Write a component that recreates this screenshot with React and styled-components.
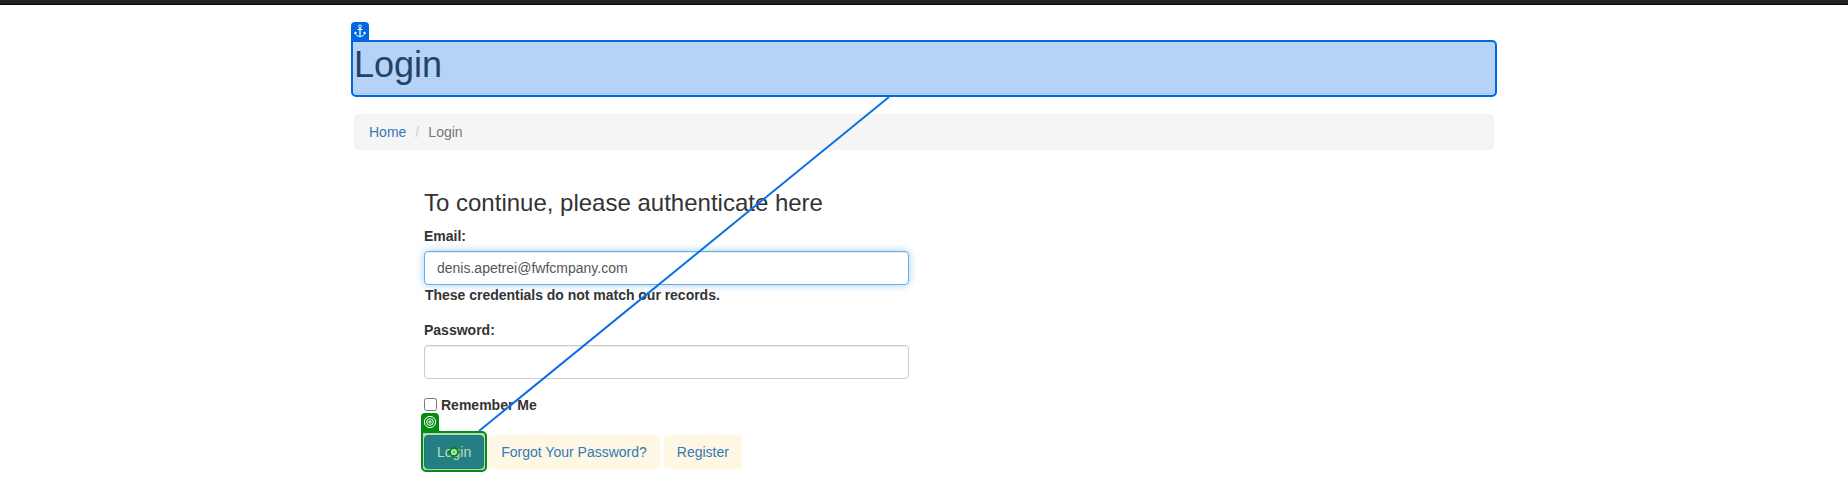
import React from "react";
import styled, { createGlobalStyle } from "styled-components";

const BLUE = "#0068e2";
const GREEN = "#008c0e";

const GlobalStyle = createGlobalStyle`
  *, *::before, *::after { box-sizing: border-box; }
  body {
    margin: 0;
    background: #fff;
    color: #333;
    font: 14px/20px "Liberation Sans", Arial, Helvetica, sans-serif;
    overflow: hidden;
  }
`;

const Page = styled.div`
  position: relative;
  height: 492px;
  overflow: hidden;
`;

const Navbar = styled.div`
  height: 5px;
  background: #222;
  border-bottom: 1px solid #080808;
`;

const Container = styled.main`
  width: 1140px;
  margin: 0 auto;
  padding-top: 39px;
`;

const PageHeader = styled.header`
  position: relative;
  height: 50px;
  border-bottom: 1px solid #eee;
  margin-bottom: 20px;
`;

const Title = styled.h1`
  margin: 0;
  font-size: 36px;
  font-weight: 400;
  line-height: 41px;
`;

const Breadcrumb = styled.nav`
  display: flex;
  height: 36px;
  padding: 8px 15px;
  border-radius: 4px;
  background: #f5f5f5;
  color: #777;
`;

const Separator = styled.span`
  width: 22px;
  padding-left: 9px;
  color: #ccc;
`;

const Link = styled.a`
  color: #337ab7;
  text-decoration: none;
`;

const Form = styled.form`
  width: 485px;
  margin: 40px 0 0 70px;
`;

const FormTitle = styled.h3`
  margin: 0 0 10px;
  font-size: 24px;
  font-weight: 400;
  line-height: 26px;
`;

const Group = styled.div`
  margin-bottom: 15px;
`;

const Label = styled.label`
  display: block;
  margin-bottom: 5px;
  font-weight: 700;
`;

const Input = styled.input`
  display: block;
  width: 100%;
  height: 34px;
  padding: 6px 12px;
  border: 1px solid ${(p) => (p.$active ? "#66afe9" : "#ccc")};
  border-radius: 4px;
  outline: 0;
  background: #fff;
  color: #555;
  font: inherit;
  box-shadow: inset 0 1px 1px rgba(0, 0, 0, 0.075)
    ${(p) => (p.$active ? ", 0 0 8px rgba(102, 175, 233, 0.6)" : "")};
`;

const ErrorText = styled.strong`
  display: block;
  padding-left: 1px;
  letter-spacing: -0.02px;
`;

const Remember = styled.label`
  display: flex;
  gap: 4px;
  height: 26px;
  margin-bottom: 15px;
  font-weight: 700;
  line-height: 22px;
`;

const Checkbox = styled.input`
  width: 13px;
  height: 13px;
  margin: 4px 0 0;
`;

const Actions = styled.div`
  display: flex;
  gap: 4px;
`;

const Button = styled.button`
  position: relative;
  height: 34px;
  padding: 6px 12px;
  border: 1px solid ${(p) => (p.$primary ? "#2e6da4" : "#fdf7e3")};
  border-radius: 4px;
  background: ${(p) => (p.$primary ? "#337ab7" : "#fdf7e3")};
  color: ${(p) => (p.$primary ? "#fff" : "#337ab7")};
  font: inherit;
  white-space: nowrap;
`;

const Highlight = styled.div`
  position: absolute;
  inset: ${(p) => p.$inset};
  border: 2px solid ${(p) => p.$color};
  border-radius: 0 5px 5px 5px;
  background: ${(p) => p.$fill};
`;

const Tag = styled.span`
  position: absolute;
  left: -2px;
  top: -20px;
  display: grid;
  place-items: center;
  width: 18px;
  height: 18px;
  border-radius: 4px 4px 0 0;
  background: ${(p) => p.$color};
`;

const Center = styled.svg`
  position: absolute;
  left: 50%;
  top: 50%;
  transform: translate(-50%, -50%);
`;

const Connector = styled.svg`
  position: absolute;
  inset: 0;
  pointer-events: none;
`;

const AnchorIcon = () => (
  <svg width="12" height="14" viewBox="0 0 12 14" fill="none" stroke="#fff" strokeWidth="1">
    <circle cx="6" cy="2.4" r="1.4" />
    <path d="M6 3.8v8.8" strokeWidth="1.3" />
    <path d="M3.5 5.5h5M1.2 8.3C1.4 11 3.4 12.4 6 12.7 8.6 12.4 10.6 11 10.8 8.3M.5 9.8l.7-1.8 1.7 1M11.5 9.8l-.7-1.8-1.7 1" />
  </svg>
);

const TargetIcon = () => (
  <svg width="14" height="14" viewBox="0 0 14 14" fill="none" stroke="#fff">
    <circle cx="7" cy="7" r="5.6" />
    <circle cx="7" cy="7" r="3.3" />
    <circle cx="7" cy="7" r="1.2" />
  </svg>
);

export default function App() {
  return (
    <Page>
      <GlobalStyle />
      <Navbar />
      <Container>
        <PageHeader>
          <Title>Login</Title>
          <Highlight $inset="-4px -3px -4px -3px" $color={BLUE} $fill="rgba(0, 104, 226, 0.29)">
            <Tag $color={BLUE}><AnchorIcon /></Tag>
          </Highlight>
        </PageHeader>
        <Breadcrumb>
          <Link>Home</Link>
          <Separator>/</Separator>
          <span>Login</span>
        </Breadcrumb>
        <Form>
          <FormTitle>To continue, please authenticate here</FormTitle>
          <Group>
            <Label>Email:</Label>
            <Input $active readOnly value="denis.apetrei@fwfcmpany.com" />
            <ErrorText>These credentials do not match our records.</ErrorText>
          </Group>
          <Group>
            <Label>Password:</Label>
            <Input type="password" />
          </Group>
          <Remember>
            <Checkbox type="checkbox" />
            Remember Me
          </Remember>
          <Actions>
            <Button type="button" $primary>
              Login
              <Highlight $inset="-5px -4px -4px -4px" $color={GREEN} $fill="rgba(0, 140, 14, 0.3)">
                <Tag $color={GREEN}><TargetIcon /></Tag>
                <Center width="12" height="12" viewBox="0 0 12 12">
                  <path d="M6 0v12M0 6h12" stroke={GREEN} strokeWidth="2" />
                  <circle cx="6" cy="6" r="4" fill="#b5e0c0" stroke={GREEN} strokeWidth="1.8" />
                  <circle cx="6" cy="6" r="1.1" fill="#4a9f83" />
                </Center>
              </Highlight>
            </Button>
            <Button type="button">Forgot Your Password?</Button>
            <Button type="button">Register</Button>
          </Actions>
        </Form>
      </Container>
      <Connector width="1848" height="492">
        <line x1="889" y1="97" x2="479" y2="431" stroke="#0b6fe3" strokeWidth="2" />
      </Connector>
    </Page>
  );
}
